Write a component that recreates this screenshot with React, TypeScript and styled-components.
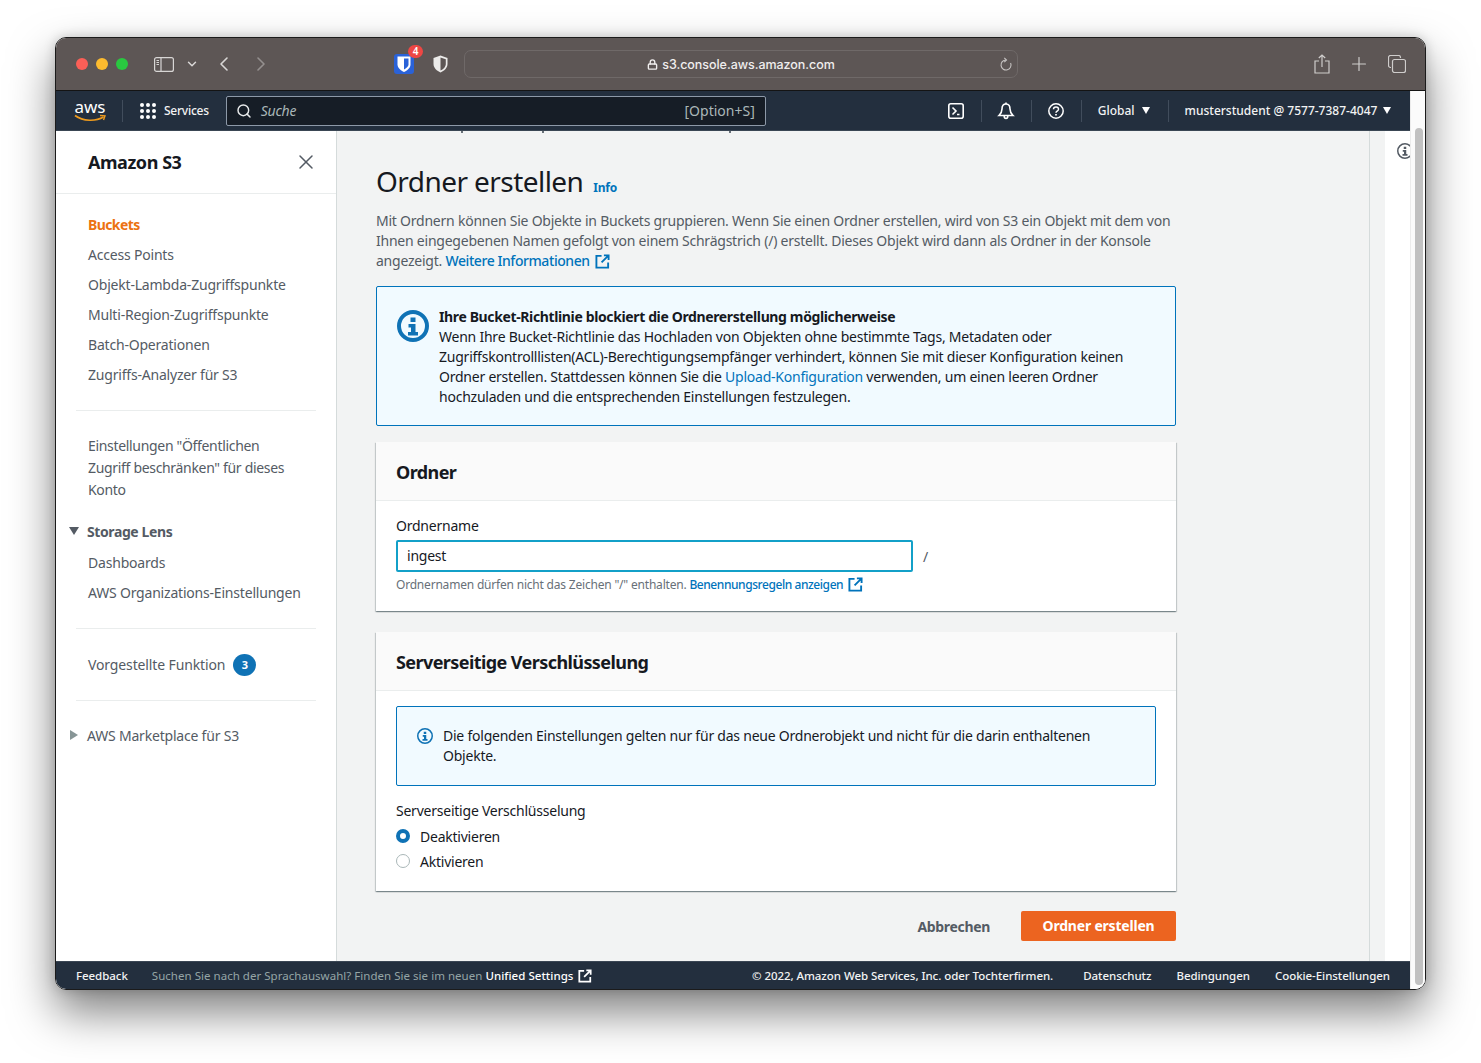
import React from "react";
import styled, {createGlobalStyle} from "styled-components";
import {ChevronDown, ChevronLeft, ChevronRight, Lock, Plus, Search, X} from "lucide-react";

const FONT = `"Noto Sans", "Open Sans", sans-serif`

const Global = createGlobalStyle`
  html, body {
    margin: 0;
    padding: 0;
    background: #ffffff;
  }
  body {
    padding: 37px 55px 74px;
    font-family: ${FONT};
    font-size: 14px;
    letter-spacing: -0.23px;
    color: #16191f;
  }
  * {
    box-sizing: border-box;
  }
`

const Window = styled.div`
  width: 1371px;
  height: 953px;
  display: flex;
  flex-direction: column;
  border-radius: 11px;
  overflow: hidden;
  border: 1px solid #1b1b1b;
  box-shadow: 0 22px 45px rgba(0, 0, 0, 0.5), 0 0 12px rgba(0, 0, 0, 0.18);
`
const TitleBar = styled.div`
  height: 53px;
  flex: none;
  display: flex;
  align-items: center;
  background: #5d5655;
  border-bottom: 1px solid #141414;
  padding-left: 20px;
  color: #d8d6d5;
`
const Light = styled.span<{$color: string}>`
  width: 12px;
  height: 12px;
  border-radius: 50%;
  margin-right: 8px;
  background: ${({$color}) => $color};
`
const ToolbarIcon = styled.span<{$left?: number; $dim?: boolean}>`
  display: flex;
  align-items: center;
  justify-content: center;
  margin-left: ${({$left}) => $left || 0}px;
  opacity: ${({$dim}) => $dim ? 0.45 : 1};
`
const Bitwarden = styled.span`
  position: relative;
  width: 20px;
  height: 20px;
  margin-left: 121px;
  background: #2a62d8;
  border-radius: 3px;
  display: flex;
  align-items: center;
  justify-content: center;
`
const BitwardenBadge = styled.span`
  position: absolute;
  top: -9px;
  right: -9px;
  width: 15px;
  height: 13px;
  border-radius: 7px;
  background: #ee4744;
  color: #ffffff;
  font-size: 10px;
  line-height: 13px;
  font-weight: 600;
  text-align: center;
`
const UrlBar = styled.div`
  width: 554px;
  height: 28px;
  margin-left: 16px;
  display: flex;
  align-items: center;
  justify-content: center;
  position: relative;
  border: 1px solid #6f6968;
  border-radius: 7px;
  font-family: Inter, sans-serif;
  font-size: 12.5px;
  letter-spacing: -0.05px;
  font-weight: 500;
  color: #f0eeee;
  gap: 4px;
`
const Reload = styled.svg`
  position: absolute;
  right: 4px;
  top: 6px;
`

const Columns = styled.div`
  flex: 1;
  min-height: 0;
  display: flex;
  background: #ffffff;
`
const Page = styled.div`
  width: 1354px;
  display: flex;
  flex-direction: column;
`
const Scrollbar = styled.div`
  flex: 1;
  padding: 37px 2px 4px 4px;
  border-left: 1px solid #ececec;
  background: #fbfbfb;
`
const ScrollThumb = styled.div`
  height: 100%;
  background: #c1c1c1;
  border-radius: 4px;
`

const Nav = styled.div`
  height: 40px;
  flex: none;
  display: flex;
  align-items: center;
  background: #232f3e;
  color: #ffffff;
  border-bottom: 1px solid #3a4654;
`
const AwsLogo = styled.div`
  width: 32px;
  height: 26px;
  margin-left: 18px;
  position: relative;
  font-size: 17px;
  line-height: 17px;
  text-align: center;
  letter-spacing: 0;
  color: #ffffff;
`
const AwsSmile = styled.svg`
  position: absolute;
  left: 0;
  top: 16px;
`
const NavDivider = styled.span<{$left: number}>`
  width: 1px;
  height: 22px;
  background: #414d5c;
  margin-left: ${({$left}) => $left}px;
`
const NavLabel = styled.span<{$left?: number}>`
  font-size: 12px;
  font-weight: 500;
  letter-spacing: 0;
  white-space: nowrap;
  margin-left: ${({$left}) => $left || 0}px;
  color: #f2f3f3;
`
const ServicesLabel = styled(NavLabel)`
  letter-spacing: -0.25px;
`
const DotGrid = styled.span`
  width: 16px;
  height: 16px;
  margin-left: 17px;
  display: grid;
  grid-template-columns: repeat(3, 4px);
  grid-template-rows: repeat(3, 4px);
  gap: 2px;
`
const Dot = styled.i`
  display: block;
  border-radius: 50%;
  background: #ffffff;
`
const SearchBox = styled.div`
  width: 540px;
  height: 30px;
  margin-left: 17px;
  display: flex;
  align-items: center;
  background: #161d26;
  border: 1px solid #8d99a8;
  border-radius: 2px;
  padding: 0 10px 0 9px;
  font-size: 14px;
  letter-spacing: 0;
  color: #aab7b8;
`
const SearchHint = styled.span`
  font-style: italic;
  letter-spacing: -0.23px;
  margin-left: 9px;
  flex: 1;
`
const NavIcon = styled.span<{$left: number}>`
  display: flex;
  margin-left: ${({$left}) => $left}px;
`
const Caret = styled.span<{$left: number}>`
  width: 0;
  height: 0;
  margin-left: ${({$left}) => $left}px;
  border-left: 4px solid transparent;
  border-right: 4px solid transparent;
  border-top: 7px solid #ffffff;
`

const Body = styled.div`
  flex: 1;
  min-height: 0;
  display: flex;
`
const Sidebar = styled.nav`
  width: 281px;
  flex: none;
  background: #ffffff;
  border-right: 1px solid #d5dbdb;
  color: #545b64;
`
const SideHeader = styled.div`
  height: 63px;
  padding: 0 18px 0 32px;
  display: flex;
  align-items: center;
  justify-content: space-between;
  border-bottom: 1px solid #eaeded;
  font-size: 18px;
  font-weight: 700;
  letter-spacing: -0.45px;
  color: #16191f;
`
const SideItems = styled.div<{$top: number}>`
  padding-top: ${({$top}) => $top}px;
`
const SideItem = styled.div<{$active?: boolean}>`
  height: 30px;
  padding-left: 32px;
  line-height: 30px;
  font-size: 14px;
  white-space: nowrap;
  color: ${({$active}) => $active ? "#ec7211" : "#545b64"};
  font-weight: ${({$active}) => $active ? 700 : 400};
  letter-spacing: ${({$active}) => $active ? -0.6 : -0.2}px;
`
const SideBlock = styled.div`
  padding: 24px 32px 0;
  line-height: 22px;
  font-size: 14px;
  letter-spacing: -0.32px;
`
const SideDivider = styled.hr<{$top: number}>`
  margin: ${({$top}) => $top}px 20px 0;
  border: 0;
  border-top: 1px solid #eaeded;
`
const SideSection = styled.div<{$bold?: boolean; $top: number}>`
  display: flex;
  align-items: center;
  margin-top: ${({$top}) => $top}px;
  height: 22px;
  padding-left: 13px;
  gap: 8px;
  font-weight: ${({$bold}) => $bold ? 700 : 400};
  letter-spacing: ${({$bold}) => $bold ? -0.4 : -0.2}px;
  color: #545b64;
`
const SideCaret = styled.span`
  width: 0;
  height: 0;
  border-left: 5px solid transparent;
  border-right: 5px solid transparent;
  border-top: 8px solid #545b64;
`
const SideArrow = styled.span`
  width: 0;
  height: 0;
  margin: 0 1px;
  border-top: 5px solid transparent;
  border-bottom: 5px solid transparent;
  border-left: 8px solid #879596;
`
const FeatureRow = styled.div`
  display: flex;
  align-items: center;
  padding-left: 32px;
  gap: 8px;
  height: 71px;
  letter-spacing: -0.13px;
`
const CountBadge = styled.span`
  width: 23px;
  height: 22px;
  border-radius: 50%;
  background: #0f72b5;
  color: #ffffff;
  font-size: 11px;
  font-weight: 700;
  line-height: 22px;
  text-align: center;
`

const Main = styled.main`
  width: 1032px;
  flex: none;
  overflow: hidden;
  background: #f2f3f3;
  padding: 0 193px 0 39px;
`
/* page is scrolled: only the descenders of the breadcrumb are left under the nav */
const ScrolledEdge = styled.div`
  height: 2px;
  background-image:
    linear-gradient(#687078, #687078),
    linear-gradient(#687078, #687078),
    linear-gradient(#687078, #687078);
  background-size: 2px 2px;
  background-repeat: no-repeat;
  background-position: 85px 0, 166px 0, 353px 0;
`
const HeadingRow = styled.div`
  display: flex;
  align-items: baseline;
  gap: 10px;
  margin-top: 28px;
  height: 40px;
`
const Heading = styled.h1`
  margin: 0;
  font-size: 28px;
  line-height: 40px;
  font-weight: 400;
  letter-spacing: -0.56px;
  color: #16191f;
`
const InfoLink = styled.a`
  font-size: 12px;
  font-weight: 700;
  letter-spacing: -0.2px;
  color: #0073bb;
`
const Intro = styled.p`
  margin: 10px 0 0;
  font-size: 14px;
  line-height: 20px;
  color: #545b64;
  white-space: nowrap;
`
const Link = styled.a<{$medium?: boolean}>`
  color: #0073bb;
  font-weight: ${({$medium}) => $medium ? 500 : 400};
  letter-spacing: ${({$medium}) => $medium ? "-0.43px" : "inherit"};
`
const LinkIcon = styled.svg`
  display: inline-block;
  vertical-align: -3px;
  margin-left: 5px;
`
const Alert = styled.div<{$height: number; $top: number}>`
  height: ${({$height}) => $height}px;
  display: flex;
  gap: 10px;
  padding: ${({$top}) => $top}px 10px 0 20px;
  background: #f1faff;
  border: 1px solid #0073bb;
  border-radius: 2px;
  line-height: 20px;
  color: #16191f;
  white-space: nowrap;
`
const AlertIcon = styled.span<{$top: number}>`
  padding-top: ${({$top}) => $top}px;
`
const PageAlert = styled(Alert)`
  margin-top: 15px;
`
const AlertTitle = styled.div`
  font-weight: 700;
  letter-spacing: -0.37px;
`
const Panel = styled.section<{$top: number; $height: number}>`
  margin-top: ${({$top}) => $top}px;
  height: ${({$height}) => $height}px;
  background: #ffffff;
  box-shadow: 0 1px 1px 0 rgba(0, 28, 36, 0.3), 1px 1px 1px 0 rgba(0, 28, 36, 0.15), -1px 1px 1px 0 rgba(0, 28, 36, 0.15);
`
const PanelHeader = styled.h2`
  margin: 0;
  height: 59px;
  padding: 2px 20px 0;
  display: flex;
  align-items: center;
  background: #fafafa;
  border-bottom: 1px solid #eaeded;
  font-size: 18px;
  font-weight: 700;
  letter-spacing: -0.58px;
  color: #16191f;
`
const PanelBody = styled.div`
  padding: 15px 20px 0;
`
const FieldLabel = styled.div<{$top?: number}>`
  margin-top: ${({$top}) => $top || 0}px;
  line-height: 20px;
  color: #16191f;
`
const InputRow = styled.div`
  display: flex;
  align-items: center;
  gap: 10px;
  margin-top: 4px;
`
const TextInput = styled.div`
  width: 517px;
  height: 32px;
  padding: 0 9px 2px;
  display: flex;
  align-items: center;
  background: #ffffff;
  border: 2px solid #13a0c8;
  border-radius: 2px;
  color: #16191f;
`
const Slash = styled.span`
  color: #545b64;
`
const Hint = styled.div`
  margin-top: 3px;
  font-size: 12px;
  letter-spacing: -0.2px;
  line-height: 20px;
  color: #687078;
  white-space: nowrap;
`
const Radio = styled.div`
  display: flex;
  align-items: center;
  gap: 10px;
  margin-top: 5px;
  height: 20px;
  color: #16191f;
`
const RadioDot = styled.span<{$checked?: boolean}>`
  width: 14px;
  height: 14px;
  border-radius: 50%;
  background: #ffffff;
  border: ${({$checked}) => $checked ? "4px solid #0f72b5" : "1px solid #aab7b8"};
`
const Actions = styled.div`
  display: flex;
  justify-content: flex-end;
  align-items: center;
  margin-top: 20px;
  gap: 31px;
`
const CancelButton = styled.button`
  all: unset;
  font-family: ${FONT};
  font-size: 14px;
  font-weight: 700;
  letter-spacing: -0.33px;
  color: #545b64;
`
const PrimaryButton = styled.button`
  width: 155px;
  height: 30px;
  border: 0;
  padding: 0 0 2px;
  border-radius: 2px;
  background: #ec6420;
  color: #ffffff;
  font-family: ${FONT};
  font-size: 14px;
  font-weight: 700;
  letter-spacing: -0.2px;
`
const Gutter = styled.div`
  width: 16px;
  flex: none;
  border-left: 1px solid #d5dbdb;
  background: #f2f3f3;
`
const ToolsRail = styled.div`
  flex: 1;
  overflow: hidden;
  background: #ffffff;
  padding: 12px 0 0 12px;
`
const Footer = styled.footer`
  height: 28px;
  flex: none;
  display: flex;
  align-items: center;
  background: #232f3e;
  border-top: 1px solid #3a4654;
  padding: 0 20px;
  font-size: 11.5px;
  font-weight: 500;
  letter-spacing: -0.05px;
  color: #f2f3f3;
  white-space: nowrap;
`
const FooterNote = styled.span`
  margin-left: 24px;
  color: #95a5a6;
  font-weight: 400;
  letter-spacing: 0.03px;
`
const FooterStrong = styled.span`
  color: #ffffff;
  font-weight: 500;
`
const FooterLinks = styled.div`
  margin-left: auto;
  display: flex;
  gap: 25px;
`
const FooterCopyright = styled.span`
  margin-right: 5px;
`

const ExternalIcon = ({size = 15, color = "#0073bb"}: {size?: number; color?: string}) => (
    <LinkIcon width={size} height={size} viewBox="0 0 16 16" fill="none" stroke={color} strokeWidth="2">
        <path d="M7 2H1.500v12.500h12.500V9"/>
        <path d="M9.500 1.500H14.500V6.500M14.500 1.500L7 9"/>
    </LinkIcon>
)

const InfoCircle = ({size, color, stroke}: {size: number; color: string; stroke: number}) => (
    <svg width={size} height={size} viewBox="0 0 32 32" fill="none">
        <circle cx="16" cy="16" r={16 - stroke / 2} stroke={color} strokeWidth={stroke}/>
        <rect x="13.500" y="7.500" width="5" height="4.500" fill={color}/>
        <path d="M11.500 14h7v8h2.500v3.500H11V22h3v-4.500h-2.500z" fill={color}/>
    </svg>
)

const sideTop = ["Access Points", "Objekt-Lambda-Zugriffspunkte", "Multi-Region-Zugriffspunkte", "Batch-Operationen", "Zugriffs-Analyzer für S3"]

export default function App() {
    return <>
        <Global/>
        <Window>
            <TitleBar>
                <Light $color="#fb5f57"/>
                <Light $color="#fdbb2f"/>
                <Light $color="#29c840"/>
                <ToolbarIcon $left={18}>
                    <svg width="20" height="15" viewBox="0 0 20 15" fill="none" stroke="#d8d6d5" strokeWidth="1.200">
                        <rect x="0.600" y="0.600" width="18.800" height="13.800" rx="2"/>
                        <path d="M7 0.600v13.800"/>
                        <path d="M2.500 3.500h2.500M2.500 5.500h2.500M2.500 7.500h2.500" strokeWidth="1"/>
                    </svg>
                </ToolbarIcon>
                <ToolbarIcon $left={11}><ChevronDown size={14} strokeWidth={2.5}/></ToolbarIcon>
                <ToolbarIcon $left={13}><ChevronLeft size={24} strokeWidth={1.600}/></ToolbarIcon>
                <ToolbarIcon $left={13} $dim><ChevronRight size={24} strokeWidth={1.600}/></ToolbarIcon>
                <Bitwarden>
                    <svg width="14" height="16" viewBox="0 0 14 16">
                        <path d="M0.500 0.500h13v8c0 3.500-3.500 6-6.500 7.500C4 14.500 0.500 12 0.500 8.500z" fill="#ffffff"/>
                        <path d="M7 2.500h4.500v6c0 2-2.300 3.700-4.500 5z" fill="#2a62d8"/>
                    </svg>
                    <BitwardenBadge>4</BitwardenBadge>
                </Bitwarden>
                <ToolbarIcon $left={19}>
                    <svg width="15" height="18" viewBox="0 0 15 18">
                        <path d="M7.500 0.500L14.500 3v6c0 4-3.500 7-7 8.500C4 16 0.500 13 0.500 9V3z" fill="#ecebea"/>
                        <path d="M7.500 2.500L12.800 4.300V9c0 3-2.700 5.300-5.300 6.500z" fill="#5d5655"/>
                    </svg>
                </ToolbarIcon>
                <UrlBar>
                    <Lock size={11} strokeWidth={3}/>
                    s3.console.aws.amazon.com
                    <Reload width="14" height="15" viewBox="0 0 14 15" fill="none" stroke="#c6c3c2" strokeWidth="1.100">
                        <path d="M7 3a5 5 0 1 0 4.600 3"/>
                        <path d="M5.300 0.800L7.500 3 5.300 5.200"/>
                    </Reload>
                </UrlBar>
                <ToolbarIcon $left={296}>
                    <svg width="16" height="20" viewBox="0 0 16 20" fill="none" stroke="#cfcdcc" strokeWidth="1.200">
                        <path d="M5 7H1v12h14V7h-4"/>
                        <path d="M8 13V1M4.800 4L8 1l3.200 3"/>
                    </svg>
                </ToolbarIcon>
                <ToolbarIcon $left={18}><Plus size={22} strokeWidth={1.300} color="#cfcdcc"/></ToolbarIcon>
                <ToolbarIcon $left={18}>
                    <svg width="18" height="18" viewBox="0 0 18 18" fill="none" stroke="#cfcdcc" strokeWidth="1.200">
                        <path d="M3 12.500H2.500a2 2 0 0 1-2-2V2.500a2 2 0 0 1 2-2h8a2 2 0 0 1 2 2V3"/>
                        <rect x="4.500" y="4.500" width="13" height="13" rx="2"/>
                    </svg>
                </ToolbarIcon>
            </TitleBar>
            <Columns>
                <Page>
                    <Nav>
                        <AwsLogo>
                            aws
                            <AwsSmile width="32" height="9" viewBox="0 0 32 9" fill="none">
                                <path d="M1 1.500C9 7.500 22 7.500 29.500 3" stroke="#ec9a1e" strokeWidth="1.600"/>
                                <path d="M26 1.500L31 1.800 29.500 6" stroke="#ec9a1e" strokeWidth="1.400"/>
                            </AwsSmile>
                        </AwsLogo>
                        <NavDivider $left={16}/>
                        <DotGrid>
                            {Array.from({length: 9}).map((_, i) => <Dot key={i}/>)}
                        </DotGrid>
                        <ServicesLabel $left={8}>Services</ServicesLabel>
                        <SearchBox>
                            <Search size={16} strokeWidth={2.200} color="#e8eaeb"/>
                            <SearchHint>Suche</SearchHint>
                            [Option+S]
                        </SearchBox>
                        <NavIcon $left={182}>
                            <svg width="16" height="16" viewBox="0 0 16 16" fill="none" stroke="#ffffff" strokeWidth="1.600">
                                <rect x="0.800" y="0.800" width="14.400" height="14.400" rx="2"/>
                                <path d="M4.500 4.500L8 8l-3.500 3.500M9 11.500h2.500"/>
                            </svg>
                        </NavIcon>
                        <NavDivider $left={17}/>
                        <NavIcon $left={15}>
                            <svg width="18" height="18" viewBox="0 0 18 18" fill="none" stroke="#ffffff" strokeWidth="1.600">
                                <path d="M9 2c-3 0-4 2.500-4 5 0 3-1 4.500-3 6.500h14c-2-2-3-3.500-3-6.500 0-2.500-1-5-4-5z"/>
                                <path d="M9 2V0.500M7.200 14c0 1.500.8 2.500 1.800 2.500s1.800-1 1.800-2.500"/>
                            </svg>
                        </NavIcon>
                        <NavDivider $left={16}/>
                        <NavIcon $left={16}>
                            <svg width="16" height="16" viewBox="0 0 16 16" fill="none" stroke="#ffffff" strokeWidth="1.500">
                                <circle cx="8" cy="8" r="7.200"/>
                                <path d="M5.500 6.200C5.500 4.800 6.600 4 8 4s2.500.9 2.500 2.200c0 2-2.500 1.900-2.500 3.600"/>
                                <path d="M8 11v1.600" strokeWidth="1.700"/>
                            </svg>
                        </NavIcon>
                        <NavDivider $left={17}/>
                        <NavLabel $left={16}>Global</NavLabel>
                        <Caret $left={7}/>
                        <NavDivider $left={18}/>
                        <NavLabel $left={16}>musterstudent @ 7577-7387-4047</NavLabel>
                        <Caret $left={6}/>
                    </Nav>
                    <Body>
                        <Sidebar>
                            <SideHeader>
                                Amazon S3
                                <X size={24} strokeWidth={1.500} color="#545b64"/>
                            </SideHeader>
                            <SideItems $top={16}>
                                <SideItem $active>Buckets</SideItem>
                                {sideTop.map((item) => <SideItem key={item}>{item}</SideItem>)}
                            </SideItems>
                            <SideDivider $top={20}/>
                            <SideBlock>
                                Einstellungen "Öffentlichen<br/>
                                Zugriff beschränken" für dieses<br/>
                                Konto
                            </SideBlock>
                            <SideSection $bold $top={19}>
                                <SideCaret/>
                                Storage Lens
                            </SideSection>
                            <SideItems $top={6}>
                                <SideItem>Dashboards</SideItem>
                                <SideItem>AWS Organizations-Einstellungen</SideItem>
                            </SideItems>
                            <SideDivider $top={20}/>
                            <FeatureRow>
                                Vorgestellte Funktion
                                <CountBadge>3</CountBadge>
                            </FeatureRow>
                            <SideDivider $top={0}/>
                            <SideSection $top={23}>
                                <SideArrow/>
                                AWS Marketplace für S3
                            </SideSection>
                        </Sidebar>
                        <Main>
                            <ScrolledEdge/>
                            <HeadingRow>
                                <Heading>Ordner erstellen</Heading>
                                <InfoLink>Info</InfoLink>
                            </HeadingRow>
                            <Intro>
                                Mit Ordnern können Sie Objekte in Buckets gruppieren. Wenn Sie einen Ordner erstellen, wird von S3 ein Objekt mit dem von<br/>
                                Ihnen eingegebenen Namen gefolgt von einem Schrägstrich (/) erstellt. Dieses Objekt wird dann als Ordner in der Konsole<br/>
                                angezeigt. <Link $medium>Weitere Informationen<ExternalIcon/></Link>
                            </Intro>
                            <PageAlert $height={140} $top={20}>
                                <AlertIcon $top={3}><InfoCircle size={32} color="#0f72b5" stroke={4}/></AlertIcon>
                                <div>
                                    <AlertTitle>Ihre Bucket-Richtlinie blockiert die Ordnererstellung möglicherweise</AlertTitle>
                                    Wenn Ihre Bucket-Richtlinie das Hochladen von Objekten ohne bestimmte Tags, Metadaten oder<br/>
                                    Zugriffskontrolllisten(ACL)-Berechtigungsempfänger verhindert, können Sie mit dieser Konfiguration keinen<br/>
                                    Ordner erstellen. Stattdessen können Sie die <Link>Upload-Konfiguration</Link> verwenden, um einen leeren Ordner<br/>
                                    hochzuladen und die entsprechenden Einstellungen festzulegen.
                                </div>
                            </PageAlert>
                            <Panel $top={16} $height={169}>
                                <PanelHeader>Ordner</PanelHeader>
                                <PanelBody>
                                    <FieldLabel>Ordnername</FieldLabel>
                                    <InputRow>
                                        <TextInput>ingest</TextInput>
                                        <Slash>/</Slash>
                                    </InputRow>
                                    <Hint>
                                        Ordnernamen dürfen nicht das Zeichen "/" enthalten. <Link $medium>Benennungsregeln anzeigen<ExternalIcon/></Link>
                                    </Hint>
                                </PanelBody>
                            </Panel>
                            <Panel $top={21} $height={259}>
                                <PanelHeader>Serverseitige Verschlüsselung</PanelHeader>
                                <PanelBody>
                                    <Alert $height={80} $top={19}>
                                        <AlertIcon $top={2}><InfoCircle size={16} color="#0f72b5" stroke={3}/></AlertIcon>
                                        <div>
                                            Die folgenden Einstellungen gelten nur für das neue Ordnerobjekt und nicht für die darin enthaltenen<br/>
                                            Objekte.
                                        </div>
                                    </Alert>
                                    <FieldLabel $top={15}>Serverseitige Verschlüsselung</FieldLabel>
                                    <Radio><RadioDot $checked/>Deaktivieren</Radio>
                                    <Radio><RadioDot/>Aktivieren</Radio>
                                </PanelBody>
                            </Panel>
                            <Actions>
                                <CancelButton>Abbrechen</CancelButton>
                                <PrimaryButton>Ordner erstellen</PrimaryButton>
                            </Actions>
                        </Main>
                        <Gutter/>
                        <ToolsRail>
                            <InfoCircle size={16} color="#545b64" stroke={3}/>
                        </ToolsRail>
                    </Body>
                    <Footer>
                        Feedback
                        <FooterNote>
                            Suchen Sie nach der Sprachauswahl? Finden Sie sie im neuen <FooterStrong>Unified Settings</FooterStrong>
                        </FooterNote>
                        <ExternalIcon size={14} color="#ffffff"/>
                        <FooterLinks>
                            <FooterCopyright>© 2022, Amazon Web Services, Inc. oder Tochterfirmen.</FooterCopyright>
                            <span>Datenschutz</span>
                            <span>Bedingungen</span>
                            <span>Cookie-Einstellungen</span>
                        </FooterLinks>
                    </Footer>
                </Page>
                <Scrollbar><ScrollThumb/></Scrollbar>
            </Columns>
        </Window>
    </>
}
